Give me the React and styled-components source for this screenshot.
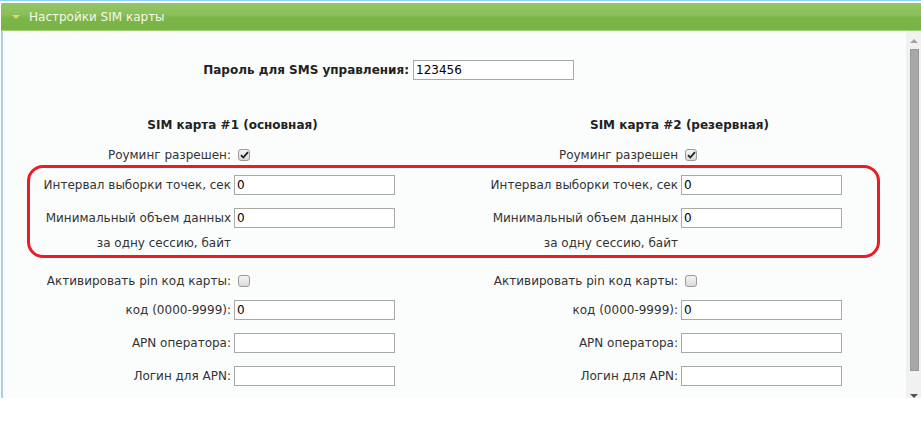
import React from "react";
import styled, { createGlobalStyle } from "styled-components";

const Global = createGlobalStyle`
  html, body { margin: 0; padding: 0; background: #fff; }
  body { font-family: "DejaVu Sans", Verdana, sans-serif; font-size: 12px; color: #333; }
`;

const TopLine = styled.div`
  height: 1px;
  background: #8fd3f2;
  margin-bottom: 2px;
`;

const Panel = styled.div`
  margin-left: 1px;
  border-left: 2px solid #a9cfea;
  width: 918px;
`;

const Header = styled.div`
  height: 27px;
  display: flex;
  align-items: center;
  gap: 9px;
  padding-left: 11px;
  margin-left: -2px;
  border-radius: 3px 0 0 0;
  background: linear-gradient(#94c566 0%, #8abf5a 42%, #7cb548 56%, #79b344 100%);
  border-bottom: 1px solid #9fcf70;
  color: #f6f8ea;
  font-size: 12px;
`;

const Arrow = styled.span`
  width: 0;
  height: 0;
  border-left: 4px solid transparent;
  border-right: 4px solid transparent;
  border-top: 4px solid #e6d177;
  margin-top: 1px;
`;

const Body = styled.div`
  display: flex;
  height: 367px;
  background: #fbfdfc;
`;

const Form = styled.div`
  flex: 1;
  padding: 0 3px 0 6px;
`;

const PasswordRow = styled.div`
  display: grid;
  grid-template-columns: 400px 161px;
  gap: 4px;
  align-items: center;
  margin-top: 29px;
  font-weight: bold;
  color: #222;
  label { text-align: right; }
`;

const Row = styled.div`
  display: grid;
  grid-template-columns: 1fr 1fr;
  margin-top: ${p => p.$gap || 0}px;
  height: ${p => p.$h || 20}px;
  align-items: center;
`;

const Cell = styled.div`
  display: grid;
  grid-template-columns: 1fr 1fr;
  column-gap: 3px;
  align-items: center;
`;

const Label = styled.span`
  text-align: right;
  white-space: nowrap;
`;

const Heading = styled.div`
  text-align: center;
  font-weight: bold;
  color: #222;
`;

const Input = styled.input`
  box-sizing: border-box;
  width: 161px;
  height: 20px;
  border: 1px solid #a9a9a9;
  background: #fff;
  font: 12px "DejaVu Sans", Verdana, sans-serif;
  color: #000;
  padding: 0 2px;
  margin: 0;
  outline: none;
`;

const Check = styled.span`
  box-sizing: border-box;
  width: 12px;
  height: 12px;
  margin-left: 4px;
  border: 1px solid #9a9a9a;
  border-radius: 3px;
  background: linear-gradient(#f4f4f4, #dadada);
  display: flex;
  align-items: center;
  justify-content: center;
`;

const Marked = styled.div`
  position: relative;
  &::after {
    content: "";
    position: absolute;
    left: 18px;
    right: 23px;
    top: -10px;
    bottom: -5px;
    border: 3px solid #ec1c24;
    border-radius: 16px;
    pointer-events: none;
  }
`;

const Track = styled.div`
  width: 15px;
  background: #f1f1f1;
  display: flex;
  flex-direction: column;
  align-items: center;
  padding-top: 8px;
  box-sizing: border-box;
`;

const ScrollArrow = styled.span`
  width: 0;
  height: 0;
  border-left: 4px solid transparent;
  border-right: 4px solid transparent;
  ${p => (p.$down ? "border-top: 4px solid #505050;" : "border-bottom: 4px solid #a3a3a3;")}
`;

const Thumb = styled.div`
  box-sizing: border-box;
  width: 9px;
  height: 323px;
  margin: 6px 0 23px 1px;
  background: #a8a8a8;
  border: 1px solid #999;
`;

const Tick = () => (
  <svg width="9" height="8" viewBox="0 0 9 8">
    <path d="M1 4.2 L3.3 6.5 L8 1.2" fill="none" stroke="#222" strokeWidth="1.8" />
  </svg>
);

const Field = ({ label, value = "" }) => (
  <Cell>
    <Label>{label}</Label>
    <Input defaultValue={value} />
  </Cell>
);

const CheckField = ({ label, checked }) => (
  <Cell>
    <Label>{label}</Label>
    <Check>{checked && <Tick />}</Check>
  </Cell>
);

export default function App() {
  return (
    <>
      <Global />
      <TopLine />
      <Panel>
        <Header>
          <Arrow />
          Настройки SIM карты
        </Header>
        <Body>
          <Form>
            <PasswordRow>
              <label>Пароль для SMS управления:</label>
              <Input defaultValue="123456" />
            </PasswordRow>
            <Row $gap={35}>
              <Heading>SIM карта #1 (основная)</Heading>
              <Heading>SIM карта #2 (резервная)</Heading>
            </Row>
            <Row $gap={10}>
              <CheckField label="Роуминг разрешен:" checked />
              <CheckField label="Роуминг разрешен" checked />
            </Row>
            <Marked>
              <Row $gap={10}>
                <Field label="Интервал выборки точек, сек" value="0" />
                <Field label="Интервал выборки точек, сек" value="0" />
              </Row>
              <Row $gap={13}>
                <Field label="Минимальный объем данных" value="0" />
                <Field label="Минимальный объем данных" value="0" />
              </Row>
              <Row $gap={5}>
                <Cell><Label>за одну сессию, байт</Label></Cell>
                <Cell><Label>за одну сессию, байт</Label></Cell>
              </Row>
            </Marked>
            <Row $gap={18}>
              <CheckField label="Активировать pin код карты:" />
              <CheckField label="Активировать pin код карты:" />
            </Row>
            <Row $gap={9}>
              <Field label="код (0000-9999):" value="0" />
              <Field label="код (0000-9999):" value="0" />
            </Row>
            <Row $gap={13}>
              <Field label="APN оператора:" />
              <Field label="APN оператора:" />
            </Row>
            <Row $gap={13}>
              <Field label="Логин для APN:" />
              <Field label="Логин для APN:" />
            </Row>
          </Form>
          <Track>
            <ScrollArrow />
            <Thumb />
            <ScrollArrow $down />
          </Track>
        </Body>
      </Panel>
    </>
  );
}
